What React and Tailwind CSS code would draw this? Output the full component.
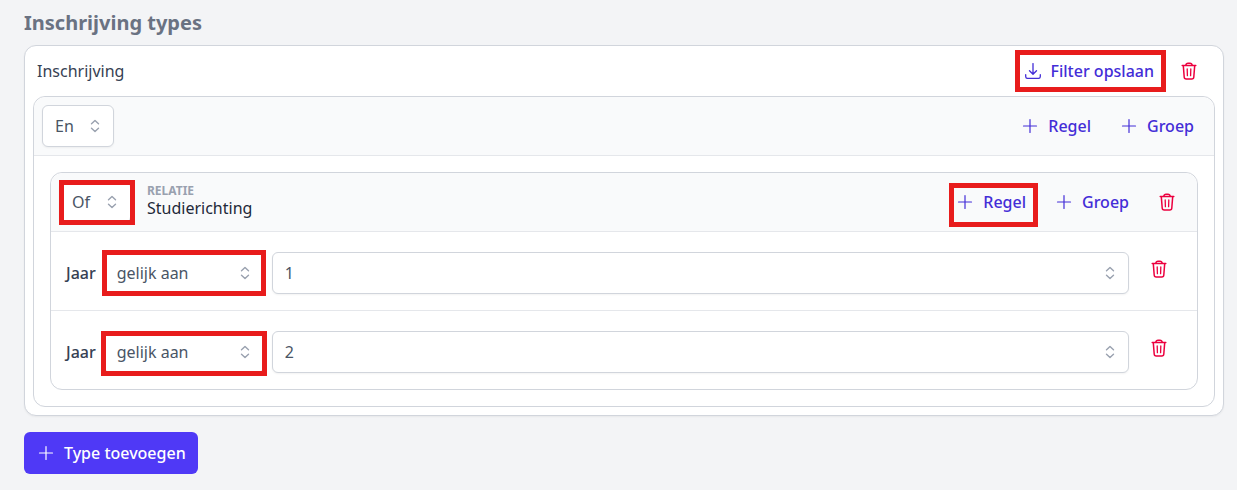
function Icon({ className, children, box, width = 1.2 }) {
  return (
    <svg
      aria-hidden="true"
      viewBox={box}
      className={className}
      fill="none"
      stroke="currentColor"
      strokeWidth={width}
      strokeLinecap="round"
      strokeLinejoin="round"
    >
      {children}
    </svg>
  )
}

function PlusIcon() {
  return (
    <Icon className="size-4 shrink-0" box="0 0 16 16" width={1.2}>
      <path d="M8 1.500v13M1.500 8h13" />
    </Icon>
  )
}

function SaveIcon() {
  return (
    <Icon className="size-4 shrink-0" box="0 0 16 16" width={1.3}>
      <path d="M8 0.600v10.600M4.500 7.700L8 11.200l3.500-3.500M0.700 11.700v1.800a1.900 1.900 0 0 0 1.900 1.900h10.800a1.900 1.900 0 0 0 1.900-1.900v-1.800" />
    </Icon>
  )
}

function TrashButton({ label }) {
  return (
    <button type="button" aria-label={label} className="shrink-0 text-[#ec003f]">
      <Icon className="h-5 w-4" box="0 0 16 20" width={1.5}>
        <path d="M1.200 4.600h13.600M2.300 4.600l.9 11.400a2 2 0 0 0 2 1.900h5.600a2 2 0 0 0 2-1.900l.9-11.400" />
        <path d="M4.800 4.300c.2-1.300 1-2.100 2.200-2.100h2c1.200 0 2 .8 2.200 2.100" />
        <path strokeWidth="1.300" d="M6.200 8l.2 6.700M9.800 8l-.2 6.700" />
      </Icon>
    </button>
  )
}

function Marker({ className }) {
  return <span aria-hidden="true" className={`pointer-events-none absolute border-5 border-[#e81c1c] ${className}`} />
}

function Select({ label, options, value, className, children }) {
  return (
    <div className={`relative ${className}`}>
      <select
        aria-label={label}
        defaultValue={value}
        className="h-[42px] w-full appearance-none rounded-md border border-gray-300 bg-white px-3 text-gray-600 shadow-xs"
      >
        {options.map((o) => (
          <option key={o}>{o}</option>
        ))}
      </select>
      <Icon className="pointer-events-none absolute top-3 right-2.5 size-[18px] text-gray-400" box="0 0 18 18" width={1.4}>
        <path d="M5.500 6.700L9 3.500l3.500 3.200M5.500 11.300L9 14.500l3.500-3.200" />
      </Icon>
      {children}
    </div>
  )
}

function AddButton({ children, marker }) {
  return (
    <button type="button" className="relative flex items-center gap-2.5 font-medium text-[#432dd7]">
      <PlusIcon />
      {children}
      {marker}
    </button>
  )
}

function Rule({ value, marker }) {
  return (
    <div className="flex items-start border-b border-gray-200 px-[15px] pt-5 pb-4 last:border-b-0">
      <span className="mr-2 leading-[42px] font-medium text-gray-700">Jaar</span>
      <Select label="Vergelijking" value="gelijk aan" options={['gelijk aan', 'niet gelijk aan']} className="mr-2 w-40 shrink-0">
        {marker}
      </Select>
      <Select label="Jaar" value={value} options={['1', '2', '3']} className="mr-[22px] min-w-0 flex-1" />
      <div className="mr-[15px] flex pt-[7px]">
        <TrashButton label="Regel verwijderen" />
      </div>
    </div>
  )
}

export default function App() {
  return (
    <main className="min-h-screen bg-gray-100 pt-2 pr-[13px] pb-4 pl-6 font-['Noto_Sans',sans-serif] text-base">
      <h1 className="mb-2 text-xl leading-[29px] font-bold text-gray-500">Inschrijving types</h1>

      <section className="rounded-xl border border-gray-300 bg-white px-2 pb-2 shadow-xs">
        <header className="flex h-[50px] items-center pr-[18px] pl-1">
          <h2 className="flex-1 text-gray-700">Inschrijving</h2>
          <button type="button" className="relative mr-[27px] flex items-center gap-2.5 font-medium text-[#432dd7]">
            <SaveIcon />
            Filter opslaan
            <Marker className="-top-[9px] -right-3 -bottom-[9px] -left-2.5" />
          </button>
          <TrashButton label="Type verwijderen" />
        </header>

        <div className="rounded-xl border border-gray-300">
          <div className="flex items-center rounded-t-xl border-b border-gray-200 bg-gray-50 p-2">
            <Select label="Voorwaarde" value="En" options={['En', 'Of']} className="w-[72px]" />
            <div className="mr-3 ml-auto flex gap-[30px]">
              <AddButton>Regel</AddButton>
              <AddButton>Groep</AddButton>
            </div>
          </div>

          <div className="p-4">
            <div className="rounded-xl border border-gray-300">
              <div className="flex items-center rounded-t-xl border-b border-gray-200 bg-gray-50 p-2">
                <Select label="Voorwaarde relatie" value="Of" options={['En', 'Of']} className="w-[72px]">
                  <Marker className="-top-px -right-1 -bottom-0.5 left-0" />
                </Select>
                <div className="ml-4 pb-1">
                  <div className="text-xs leading-4 font-bold text-gray-400">RELATIE</div>
                  <div className="leading-[18px] text-gray-800">Studierichting</div>
                </div>
                <div className="mr-[30px] ml-auto flex gap-[30px]">
                  <AddButton marker={<Marker className="-top-[7px] -right-3 -bottom-[13px] -left-2" />}>Regel</AddButton>
                  <AddButton>Groep</AddButton>
                </div>
                <div className="mr-[14px] flex">
                  <TrashButton label="Groep verwijderen" />
                </div>
              </div>
              <Rule value="1" marker={<Marker className="-inset-x-0.5 -inset-y-0.5" />} />
              <Rule value="2" marker={<Marker className="-inset-x-[3px] top-0 -bottom-[3px]" />} />
            </div>
          </div>
        </div>
      </section>

      <button type="button" className="mt-4 flex h-[42px] items-center gap-2.5 rounded-md bg-[#4f39f6] pr-3 pl-3.5 font-medium text-white">
        <PlusIcon />
        Type toevoegen
      </button>
    </main>
  )
}
